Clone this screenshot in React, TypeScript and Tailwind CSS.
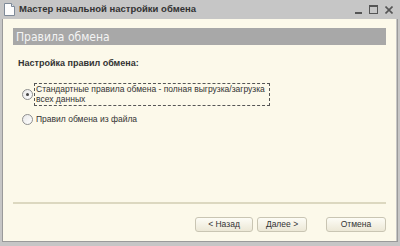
import { useState } from 'react';

function DocIcon() {
  return (
    <svg width="11" height="13" viewBox="0 0 11 13" className="shrink-0">
      <path d="M0.5 0.5h7l3 3v9h-10z" fill="#fdfdfd" stroke="#7f8a98" />
      <path d="M7.5 0.5v3h3" fill="#dde3ea" stroke="#7f8a98" />
    </svg>
  );
}

function Radio({ checked }: { checked: boolean }) {
  return (
    <span className="flex h-[11px] w-[11px] shrink-0 items-center justify-center rounded-full border border-[#8e8f8f] bg-gradient-to-br from-[#e8e8e8] to-white">
      {checked && <span className="h-[3px] w-[3px] rounded-full bg-[#444]" />}
    </span>
  );
}

function Button({ children, width }: { children: string; width: string }) {
  return (
    <button
      className={`flex h-[15px] items-center justify-center rounded-[3px] border border-[#c9c5b3] bg-gradient-to-b from-[#fdfcf6] to-[#ece8d6] text-[8.5px] text-[#333] ${width}`}
    >
      {children}
    </button>
  );
}

export default function App() {
  const [mode, setMode] = useState<'standard' | 'file'>('standard');

  return (
    <div
      className="flex h-[246px] w-[400px] flex-col bg-[#c6c6c6]"
      style={{ fontFamily: '"Liberation Sans", Arial, sans-serif' }}
    >
      {/* title bar */}
      <div className="flex h-[19px] items-center pl-[4px] pr-[7px]">
        <DocIcon />
        <span className="ml-[4px] text-[9.5px] font-bold text-[#333]">Мастер начальной настройки обмена</span>
        <div className="ml-auto flex items-center gap-[7px] text-[#444]">
          <span className="mt-[7px] h-[2px] w-[7px] bg-[#555]" />
          <span className="h-[9px] w-[9px] border border-[#555] border-t-2" />
          <svg width="8" height="8" viewBox="0 0 8 8">
            <path d="M0.5 0.5l7 7M7.5 0.5l-7 7" stroke="#555" strokeWidth="1.6" />
          </svg>
        </div>
      </div>

      {/* window body */}
      <div className="mx-[2px] mb-[4px] flex flex-1 border-b border-l border-r border-[#9a9a9a]">
        <div className="flex flex-1 flex-col border-r-[1px] border-[#c6c6c6] bg-[#fcf9ea] px-[10px] pt-[9px]">
          <div className="flex h-[17px] items-center bg-[#a8a8a8] pl-[3px] font-['Liberation_Sans_Narrow','DejaVu_Sans_Condensed',sans-serif] text-[12px] font-light text-[#f4f4f4]">
            Правила обмена
          </div>

          <div className="mt-[12px] pl-[5px] text-[9px] font-bold text-[#333]">Настройка правил обмена:</div>

          <div className="mt-[12px] flex flex-col gap-[8px] pl-[9px] text-[8.5px] leading-[10.5px] text-[#333]">
            <label className="flex items-center gap-[1px]" onClick={() => setMode('standard')}>
              <Radio checked={mode === 'standard'} />
              <span className="w-[236px] whitespace-nowrap border border-dashed border-[#555] px-[1px] py-[0px]">
                Стандартные правила обмена - полная выгрузка/загрузка
                <br />
                всех данных
              </span>
            </label>
            <label className="flex items-center gap-[1px]" onClick={() => setMode('file')}>
              <Radio checked={mode === 'file'} />
              <span className="px-[2px]">Правил обмена из файла</span>
            </label>
          </div>

          <div className="mt-auto h-[2px] bg-[#dcd8c0]" />

          <div className="flex justify-end gap-[4px] pb-[9px] pt-[13px]">
            <Button width="w-[58px]">&lt; Назад</Button>
            <Button width="w-[50px]">Далее &gt;</Button>
            <div className="w-[11px]" />
            <Button width="w-[60px]">Отмена</Button>
          </div>
        </div>
      </div>
    </div>
  );
}
